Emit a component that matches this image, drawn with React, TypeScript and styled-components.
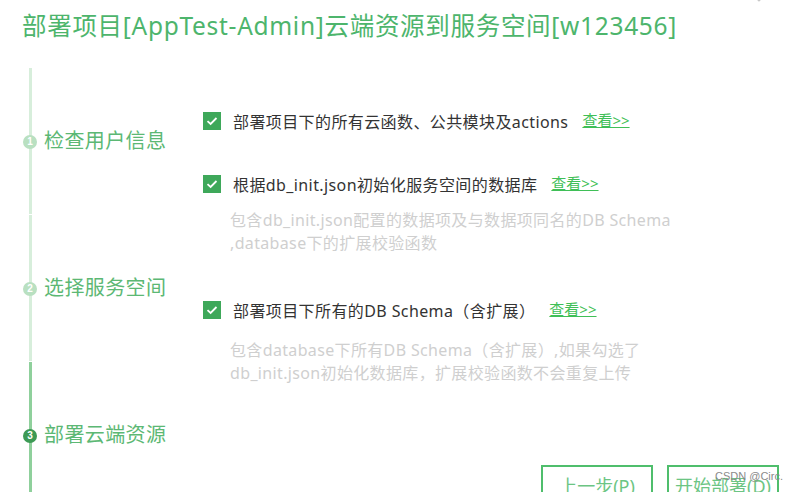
import React from "react";
import styled, { createGlobalStyle } from "styled-components";

const Global = createGlobalStyle`
  html, body { margin: 0; padding: 0; background: #fff; }
  body { width: 792px; height: 492px; overflow: hidden;
    font-family: "Noto Sans", "Noto Sans CJK SC", sans-serif; }
  * { box-sizing: border-box; }
`;

const Page = styled.div`
  position: relative;
  width: 792px;
  height: 492px;
  overflow: hidden;
  display: flex;
  flex-direction: column;
`;

const Header = styled.div`
  height: 68px;
  flex-shrink: 0;
  display: flex;
  align-items: flex-start;
  padding: 8px 0 0 22px;
`;

const Title = styled.h1`
  margin: 0;
  font-weight: 400;
  font-size: 24.5px;
  line-height: 36px;
  color: #4db56c;
  letter-spacing: 0.7px;
  white-space: nowrap;
`;

const Close = styled.svg`
  position: absolute;
  top: -10px;
  left: 748px;
  width: 22px;
  height: 17px;
`;

const Body = styled.div`
  flex: 1;
  min-height: 0;
  display: flex;
`;

const Steps = styled.div`
  width: 203px;
  flex-shrink: 0;
  padding-left: 29px;
  display: flex;
  flex-direction: column;
  gap: 1px;
`;

const Step = styled.div<{ $active?: boolean }>`
  position: relative;
  height: 146px;
  flex-shrink: 0;
  border-left: 3px solid ${(p) => (p.$active ? "#8fd09c" : "#d7eedb")};
  display: flex;
  align-items: center;
  padding-left: 12px;
`;

const Dot = styled.span<{ $active?: boolean }>`
  position: absolute;
  left: -9px;
  top: 50%;
  margin-top: -6.5px;
  width: 14px;
  height: 14px;
  border-radius: 50%;
  background: ${(p) => (p.$active ? "#3d9a55" : "#b9e0c1")};
  color: #fff;
  font-size: 10px;
  line-height: 14px;
  text-align: center;
  font-family: "Liberation Sans", sans-serif;
  font-weight: 700;
`;

const StepLabel = styled.span`
  font-size: 20px;
  color: #5cb874;
  line-height: 28px;
  letter-spacing: 0.4px;
  margin-top: -1px;
`;

const Options = styled.div`
  display: flex;
  flex-direction: column;
  padding-top: 42px;
`;

const Option = styled.div<{ $gap: number }>`
  display: flex;
  flex-direction: column;
  margin-bottom: ${(p) => p.$gap}px;
`;

const Row = styled.div`
  display: flex;
  align-items: center;
  height: 22px;
`;

const Check = styled.span`
  width: 18px;
  height: 18px;
  background: #3ea85a;
  display: inline-flex;
  align-items: center;
  justify-content: center;
  margin-right: 12px;
`;

const OptText = styled.span`
  font-size: 16px;
  color: #333;
  letter-spacing: 0.4px;
  white-space: nowrap;
`;

const Link = styled.a`
  font-size: 15px;
  color: #3fbf57;
  text-decoration: underline;
  margin-left: 14px;
  margin-top: -4px;
  white-space: nowrap;
`;

const Desc = styled.div<{ $top: number }>`
  padding-left: 27px;
  margin-top: ${(p) => p.$top}px;
  font-size: 16px;
  line-height: 23px;
  letter-spacing: 0.35px;
  color: #cfcfcf;
  white-space: nowrap;
`;

const Footer = styled.div`
  position: absolute;
  left: 541px;
  top: 465px;
  display: flex;
  gap: 14px;
`;

const Button = styled.button`
  width: 112px;
  height: 36px;
  background: #fff;
  border: 2px solid #4fbe6c;
  color: #6cc583;
  font-size: 18px;
  font-family: "Noto Sans", "Noto Sans CJK SC", sans-serif;
  padding: 6px 0 0;
  line-height: 24px;
`;

const Watermark = styled.span`
  position: absolute;
  left: 715px;
  top: 470px;
  font-size: 11px;
  color: #8a8a8a;
  font-family: "Liberation Sans", sans-serif;
`;

const Tick = () => (
  <svg width="12" height="10" viewBox="0 0 12 10">
    <path d="M1.5 5.2 L4.6 8 L10.5 2" fill="none" stroke="#fff" strokeWidth="1.8" />
  </svg>
);

const options = [
  { text: "部署项目下的所有云函数、公共模块及actions", gap: 41, top: 0 },
  {
    text: "根据db_init.json初始化服务空间的数据库",
    desc: ["包含db_init.json配置的数据项及与数据项同名的DB Schema", ",database下的扩展校验函数"],
    gap: 44,
    top: 14,
  },
  {
    text: "部署项目下所有的DB Schema（含扩展）",
    desc: ["包含database下所有DB Schema（含扩展）,如果勾选了", "db_init.json初始化数据库，扩展校验函数不会重复上传"],
    gap: 0,
    top: 18,
  },
];

export default function App() {
  return (
    <Page>
      <Global />
      <Header>
        <Title>部署项目[AppTest-Admin]云端资源到服务空间[w123456]</Title>
      </Header>
      <Close viewBox="0 0 22 17">
        <path d="M2 2 L11 11 L20 2" fill="none" stroke="#c8c8c8" strokeWidth="1.2" />
      </Close>
      <Body>
        <Steps>
          <Step>
            <Dot>1</Dot>
            <StepLabel>检查用户信息</StepLabel>
          </Step>
          <Step>
            <Dot>2</Dot>
            <StepLabel>选择服务空间</StepLabel>
          </Step>
          <Step $active>
            <Dot $active>3</Dot>
            <StepLabel>部署云端资源</StepLabel>
          </Step>
        </Steps>
        <Options>
          {options.map((o) => (
            <Option key={o.text} $gap={o.gap}>
              <Row>
                <Check>
                  <Tick />
                </Check>
                <OptText>{o.text}</OptText>
                <Link>查看&gt;&gt;</Link>
              </Row>
              {o.desc && (
                <Desc $top={o.top}>
                  {o.desc.map((d) => (
                    <div key={d}>{d}</div>
                  ))}
                </Desc>
              )}
            </Option>
          ))}
        </Options>
      </Body>
      <Footer>
        <Button>上一步(P)</Button>
        <Button>开始部署(D)</Button>
      </Footer>
      <Watermark>CSDN @Circ.</Watermark>
    </Page>
  );
}
